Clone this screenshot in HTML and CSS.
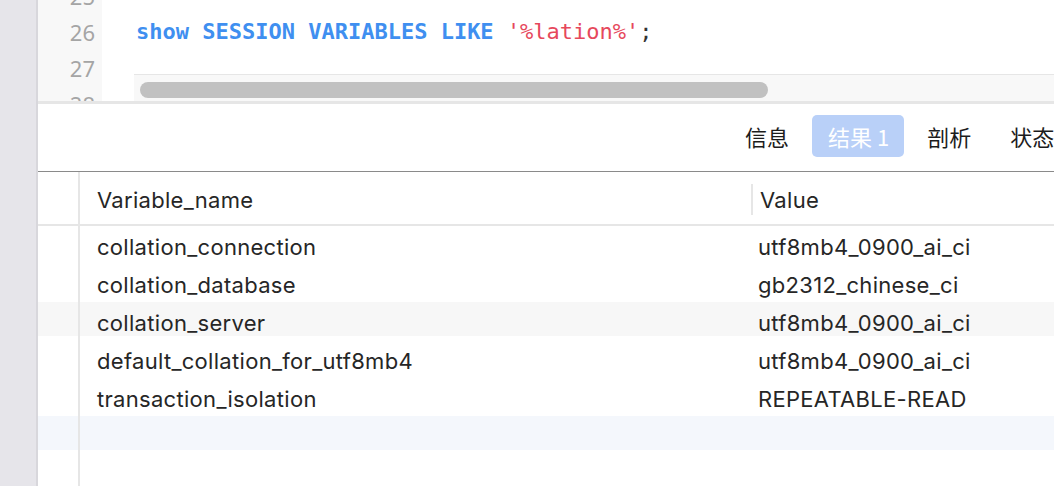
FILE: index.html
```html
<!DOCTYPE html>
<html lang="zh">
<head>
<meta charset="utf-8">
<title>Query</title>
<link rel="stylesheet" href="styles.css">
</head>
<body>
<div class="sidebar"></div>
<div class="main">
  <div class="editor">
    <div class="gutter">
      <div class="ln">25</div>
      <div class="ln">26</div>
      <div class="ln">27</div>
      <div class="ln">28</div>
    </div>
    <div class="code">
      <div class="cl"></div>
      <div class="cl"><span class="kw">show SESSION VARIABLES LIKE</span> <span class="str">'%lation%'</span><span class="punc">;</span></div>
      <div class="cl"></div>
      <div class="cl"></div>
    </div>
    <div class="hscroll"><div class="thumb"></div></div>
  </div>
  <div class="tabbar">
    <div class="tab">信息</div>
    <div class="tab active">结果 1</div>
    <div class="tab">剖析</div>
    <div class="tab">状态</div>
  </div>
  <div class="table">
    <div class="row head">
      <div class="num"></div>
      <div class="cell">Variable_name</div>
      <div class="cell val"><span class="divider">Value</span></div>
    </div>
    <div class="row">
      <div class="num"></div>
      <div class="cell">collation_connection</div>
      <div class="cell val">utf8mb4_0900_ai_ci</div>
    </div>
    <div class="row">
      <div class="num"></div>
      <div class="cell">collation_database</div>
      <div class="cell val">gb2312_chinese_ci</div>
    </div>
    <div class="row stripe">
      <div class="num"></div>
      <div class="cell">collation_server</div>
      <div class="cell val">utf8mb4_0900_ai_ci</div>
    </div>
    <div class="row">
      <div class="num"></div>
      <div class="cell">default_collation_for_utf8mb4</div>
      <div class="cell val">utf8mb4_0900_ai_ci</div>
    </div>
    <div class="row">
      <div class="num"></div>
      <div class="cell">transaction_isolation</div>
      <div class="cell val">REPEATABLE-READ</div>
    </div>
    <div class="row blank">
      <div class="num"></div>
      <div class="cell"></div>
      <div class="cell val"></div>
    </div>
    <div class="row filler">
      <div class="num"></div>
    </div>
  </div>
</div>
</body>
</html>
```

FILE: styles.css
```css
html, body {
  margin: 0;
  padding: 0;
  height: 486px;
  overflow: hidden;
  background: #ffffff;
}
body {
  display: flex;
  font-family: Inter, "Liberation Sans", sans-serif;
}
.sidebar {
  width: 36px;
  flex-shrink: 0;
  background: #e6e5ea;
  border-right: 2px solid #d8d7dc;
}
.main {
  flex: 1;
  display: flex;
  flex-direction: column;
  overflow: hidden;
  min-width: 0;
}
.editor {
  position: relative;
  height: 101px;
  flex-shrink: 0;
  display: flex;
  overflow: hidden;
  border-bottom: 3px solid #e6e6e6;
}
.gutter {
  width: 64px;
  flex-shrink: 0;
  background: #f8f8f8;
  margin-top: -22px;
  text-align: right;
}
.ln {
  height: 36px;
  line-height: 36px;
  padding-right: 7px;
  font-family: "Noto Sans", sans-serif;
  font-size: 22px;
  color: #a5a5a5;
}
.code {
  flex: 1;
  margin-top: -22px;
  padding-left: 34px;
  font-family: "DejaVu Sans Mono", monospace;
  font-size: 22px;
}
.cl {
  height: 36px;
  line-height: 36px;
  white-space: pre;
}
.kw {
  color: #3f8ff0;
  font-weight: bold;
}
.str {
  color: #e6485c;
}
.punc {
  color: #333333;
}
.hscroll {
  position: absolute;
  left: 96px;
  right: 0;
  bottom: 0;
  height: 27px;
  background: #f8f8f8;
  border-top: 1px solid #e6e6e6;
  box-sizing: border-box;
  padding: 7px 0 0 6px;
}
.thumb {
  width: 628px;
  height: 16px;
  border-radius: 8px;
  background: #c1c1c1;
}
.tabbar {
  height: 68px;
  flex-shrink: 0;
  box-sizing: border-box;
  border-bottom: 1px solid #8a8a8a;
  display: flex;
  align-items: flex-start;
  gap: 7px;
  padding: 11px 0 0 691px;
  overflow: hidden;
}
.tab {
  height: 42px;
  line-height: 42px;
  padding: 0 16px;
  border-radius: 5px;
  font-family: "Noto Sans CJK SC", "Noto Sans", sans-serif;
  font-size: 22px;
  color: #1c1c1c;
  white-space: nowrap;
  flex-shrink: 0;
}
.tab.active {
  background: #b9d0f8;
  color: #ffffff;
  padding: 0 15px 0 16px;
}
.table {
  flex: 1;
  display: flex;
  flex-direction: column;
  min-height: 0;
}
.row {
  display: grid;
  grid-template-columns: 42px 671px 1fr;
  height: 38px;
  flex-shrink: 0;
  font-size: 22px;
  letter-spacing: 0.3px;
  color: #262626;
}
.row.head {
  height: 54px;
  box-sizing: border-box;
  border-bottom: 2px solid #e6e6e6;
}
.row.stripe {
  background: linear-gradient(#f7f7f7, #f7f7f7) top left / 100% 34px no-repeat;
}
.row.blank {
  background: linear-gradient(#f4f7fc, #f4f7fc) top left / 100% 34px no-repeat;
}
.row.filler {
  flex: 1;
  height: auto;
}
.num {
  border-right: 2px solid #e6e6e6;
}
.cell {
  display: flex;
  align-items: center;
  box-sizing: border-box;
  padding: 4px 0 0 17px;
  white-space: nowrap;
  overflow: hidden;
}
.head .cell {
  padding-top: 3px;
}
.cell.val {
  padding-left: 7px;
}
.head .cell.val {
  padding-left: 0;
}
.divider {
  display: flex;
  align-items: center;
  height: 31px;
  border-left: 2px solid #e6e6e6;
  padding-left: 7px;
}
```
